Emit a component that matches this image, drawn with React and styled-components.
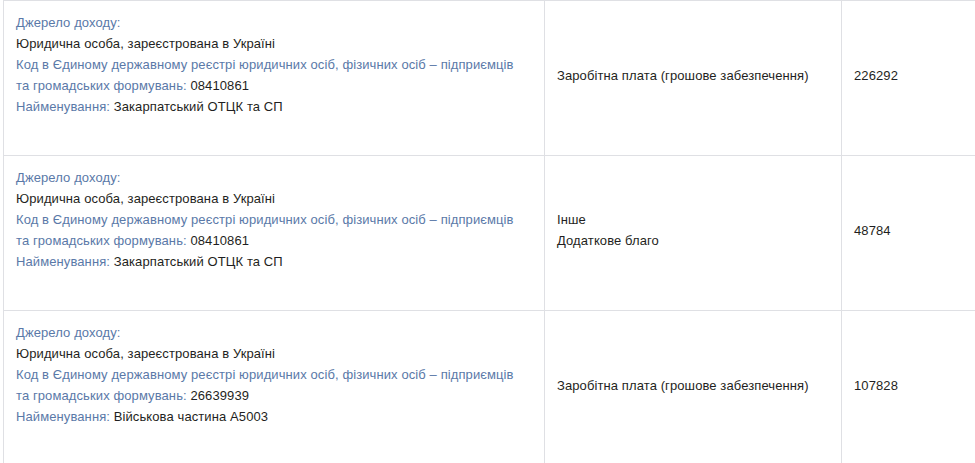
import React from "react";
import styled, { createGlobalStyle } from "styled-components";

const GlobalStyle = createGlobalStyle`
  html, body {
    margin: 0;
    padding: 0;
    background: #fff;
    overflow: hidden;
  }
  body {
    font-family: "Liberation Sans", Arial, Helvetica, sans-serif;
    font-size: 13px;
    letter-spacing: 0.1px;
    color: #1f1f22;
  }
`;

const Table = styled.div`
  margin-left: 3px;
  width: 1000px;
  display: grid;
  grid-template-columns: 541px 297px 1fr;
  border-top: 1px solid #dfe0e4;
  border-left: 1px solid #dfe0e4;
`;

const Cell = styled.div`
  height: 155px;
  box-sizing: border-box;
  border-right: 1px solid #dfe0e4;
  border-bottom: 1px solid #dfe0e4;
  padding: ${(p) => (p.$top ? "11px 12px 0" : "0 12px 6px")};
  display: flex;
  flex-direction: column;
  justify-content: ${(p) => (p.$top ? "flex-start" : "center")};
  line-height: 21px;
`;

const Label = styled.span`
  color: #5a79a8;
`;

const Line = styled.div`
  white-space: nowrap;
`;

const rows = [
  {
    code: "08410861",
    name: "Закарпатський ОТЦК та СП",
    type: ["Заробітна плата (грошове забезпечення)"],
    sum: "226292",
  },
  {
    code: "08410861",
    name: "Закарпатський ОТЦК та СП",
    type: ["Інше", "Додаткове благо"],
    sum: "48784",
  },
  {
    code: "26639939",
    name: "Військова частина А5003",
    type: ["Заробітна плата (грошове забезпечення)"],
    sum: "107828",
  },
];

export default function App() {
  return (
    <>
      <GlobalStyle />
      <Table>
        {rows.map((r, i) => (
          <React.Fragment key={i}>
            <Cell $top>
              <Line>
                <Label>Джерело доходу:</Label>
              </Line>
              <Line>Юридична особа, зареєстрована в Україні</Line>
              <Line>
                <Label>
                  Код в Єдиному державному реєстрі юридичних осіб, фізичних осіб – підприємців
                </Label>
              </Line>
              <Line>
                <Label>та громадських формувань:</Label> {r.code}
              </Line>
              <Line>
                <Label>Найменування:</Label> {r.name}
              </Line>
            </Cell>
            <Cell>
              {r.type.map((t) => (
                <Line key={t}>{t}</Line>
              ))}
            </Cell>
            <Cell>
              <Line>{r.sum}</Line>
            </Cell>
          </React.Fragment>
        ))}
      </Table>
    </>
  );
}
